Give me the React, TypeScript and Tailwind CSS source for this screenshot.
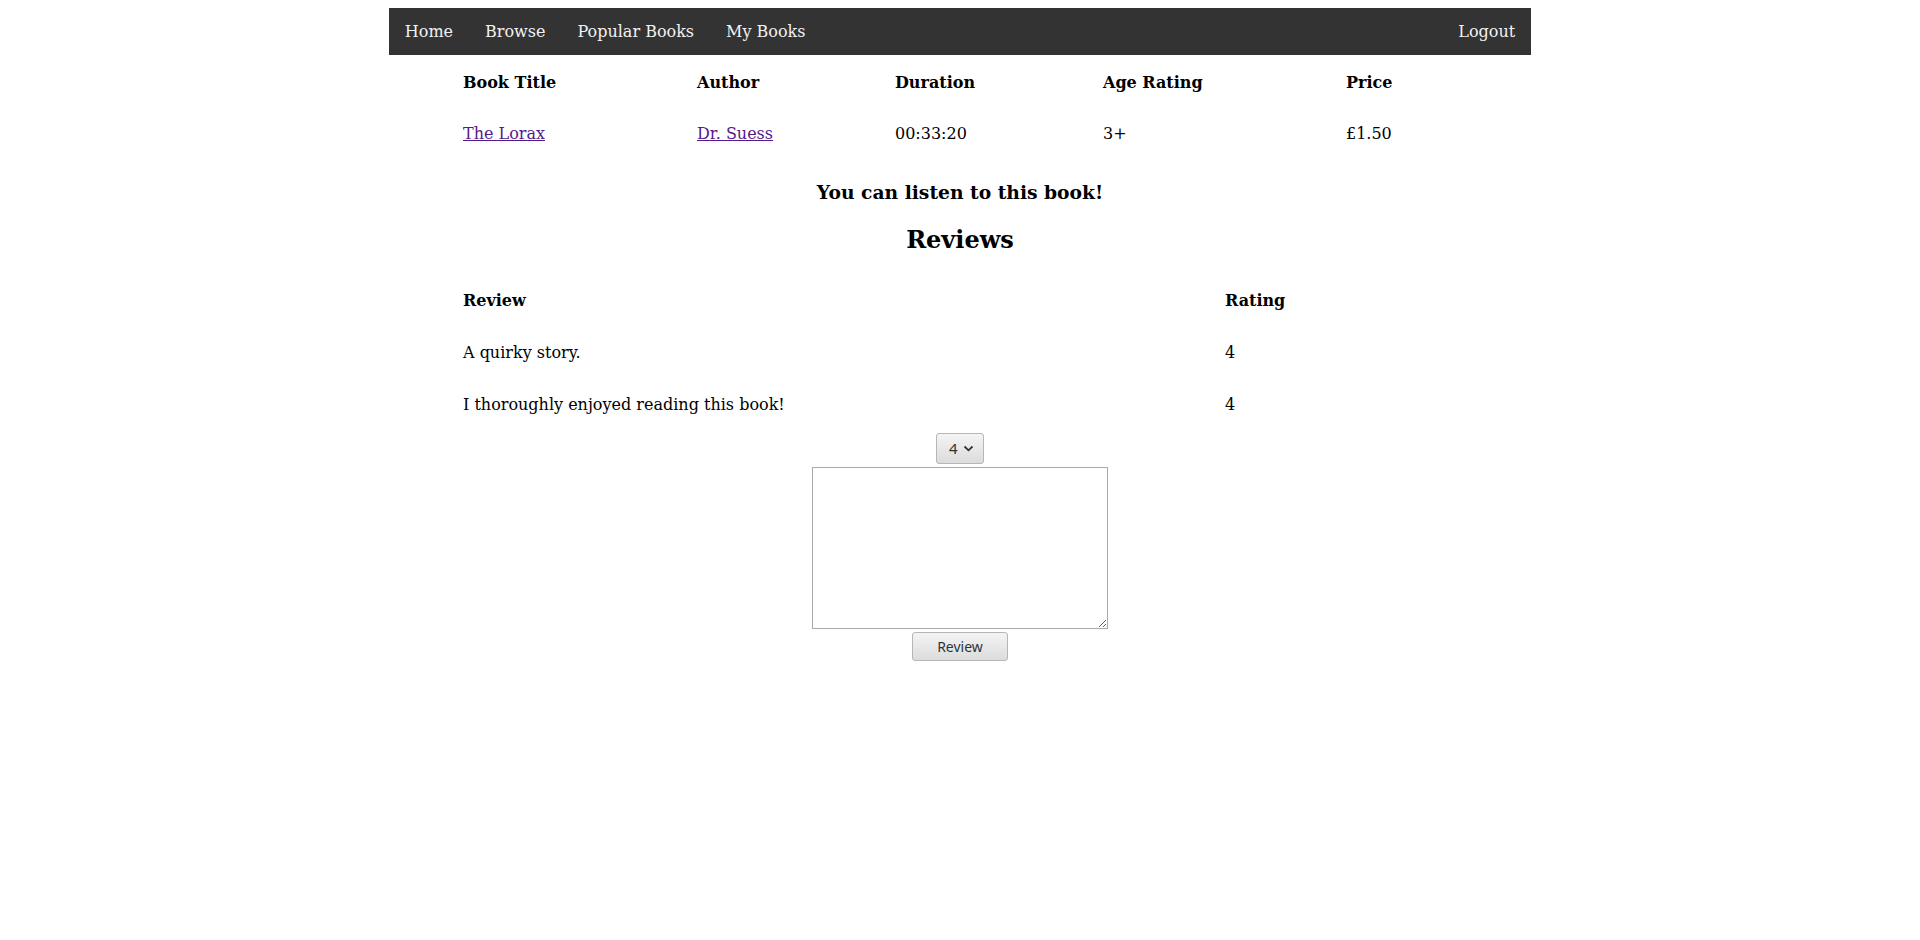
import React, { useState } from "react";

const navLinks = ["Home", "Browse", "Popular Books", "My Books"];

const books = [
  { title: "The Lorax", author: "Dr. Suess", duration: "00:33:20", age: "3+", price: "£1.50" },
];

const reviews = [
  { text: "A quirky story.", rating: 4 },
  { text: "I thoroughly enjoyed reading this book!", rating: 4 },
];

const App: React.FC = () => {
  const [rating, setRating] = useState("4");
  const [review, setReview] = useState("");

  return (
    <div className="p-2 bg-white text-black min-h-[940px]" style={{ fontFamily: '"DejaVu Serif", serif' }}>
      <div className="w-[60%] mx-auto">
        <nav className="flex bg-[#333333]">
          {navLinks.map((l) => (
            <a key={l} href="#" className="px-4 py-[14px] text-[16px] leading-[19px] text-[#f2f2f2]">
              {l}
            </a>
          ))}
          <a href="#" className="ml-auto px-4 py-[14px] text-[16px] leading-[19px] text-[#f2f2f2]">
            Logout
          </a>
        </nav>

        <table className="w-[1030px] mx-auto table-fixed border-separate border-spacing-[2px] text-[16px]">
          <thead>
            <tr>
              <th className="w-[232px] pt-[17px] pb-[15px] px-4 leading-[18px] text-left font-bold">Book Title</th>
              <th className="w-[196px] pt-[17px] pb-[15px] px-4 leading-[18px] text-left font-bold">Author</th>
              <th className="w-[206px] pt-[17px] pb-[15px] px-4 leading-[18px] text-left font-bold">Duration</th>
              <th className="w-[241px] pt-[17px] pb-[15px] px-4 leading-[18px] text-left font-bold">Age Rating</th>
              <th className="w-[143px] pt-[17px] pb-[15px] px-4 leading-[18px] text-left font-bold">Price</th>
            </tr>
          </thead>
          <tbody>
            {books.map((b) => (
              <tr key={b.title}>
                <td className="p-4 leading-[18px]">
                  <a href="#" className="text-[#551a8b] underline">{b.title}</a>
                </td>
                <td className="p-4 leading-[18px]">
                  <a href="#" className="text-[#551a8b] underline">{b.author}</a>
                </td>
                <td className="p-4 leading-[18px]">{b.duration}</td>
                <td className="p-4 leading-[18px]">{b.age}</td>
                <td className="p-4 leading-[18px]">{b.price}</td>
              </tr>
            ))}
          </tbody>
        </table>

        <h3 className="mt-[20px] text-center font-bold text-[18.72px] leading-[22px]">
          You can listen to this book!
        </h3>
        <h2 className="mt-[23px] text-center font-bold text-[24px] leading-[28px]">Reviews</h2>

        <table className="mt-[20px] w-[1030px] mx-auto table-fixed border-separate border-spacing-[2px] text-[16px]">
          <thead>
            <tr>
              <th className="w-[760px] p-4 leading-[18px] text-left font-bold">Review</th>
              <th className="w-[264px] p-4 leading-[18px] text-left font-bold">Rating</th>
            </tr>
          </thead>
          <tbody>
            {reviews.map((r, i) => (
              <tr key={i}>
                <td className="p-4 leading-[18px]">{r.text}</td>
                <td className="p-4 leading-[18px]">{r.rating}</td>
              </tr>
            ))}
          </tbody>
        </table>

        <form
          className="flex flex-col items-center"
          style={{ fontFamily: '"Noto Sans", sans-serif' }}
          onSubmit={(e) => e.preventDefault()}
        >
          <div className="relative mt-px">
            <select
              value={rating}
              onChange={(e) => setRating(e.target.value)}
              className="appearance-none w-[48px] h-[31px] pl-[12px] text-[15px] text-[#2e3436] border border-[#b6b6b3] rounded-[3px] bg-gradient-to-b from-[#f4f4f4] to-[#dcdcdc]"
            >
              {["1", "2", "3", "4", "5"].map((n) => (
                <option key={n} value={n}>{n}</option>
              ))}
            </select>
            <svg
              className="pointer-events-none absolute left-[27px] top-[12px]"
              width="11"
              height="7"
              viewBox="0 0 11 7"
            >
              <path d="M1.5 1.5 L5.5 5.3 L9.5 1.5" fill="none" stroke="#2e3436" strokeWidth="1.8" />
            </svg>
          </div>
          <textarea
            value={review}
            onChange={(e) => setReview(e.target.value)}
            className="mt-[3px] w-[296px] h-[162px] border border-[#aaaaaa] bg-white resize"
          />
          <button
            type="submit"
            className="mt-[3px] w-[96px] h-[29px] text-[14px] text-[#2e3436] border border-[#b6b6b3] rounded-[3px] bg-gradient-to-b from-[#f4f4f4] to-[#dcdcdc]"
          >
            Review
          </button>
        </form>
      </div>
    </div>
  );
};

export default App;
